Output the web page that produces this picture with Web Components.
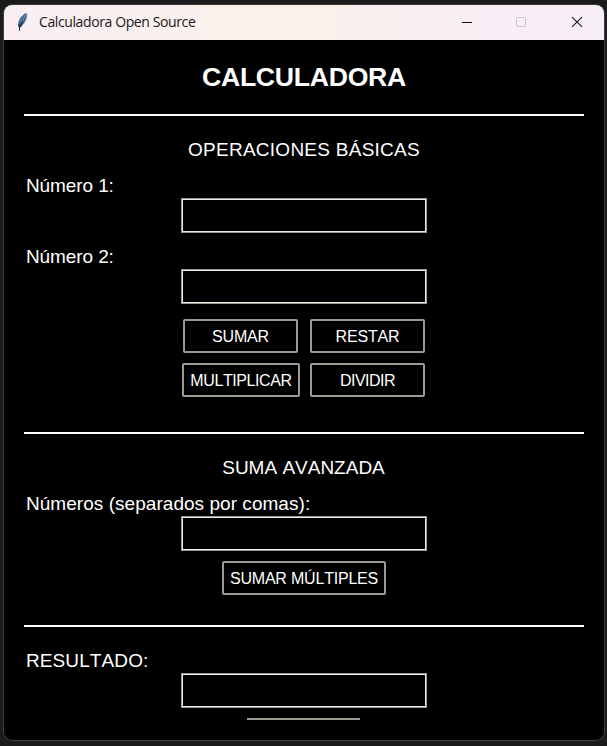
<!DOCTYPE html>
<html lang="es">
<head>
<meta charset="utf-8">
<title>Calculadora Open Source</title>
<style>
html,body{margin:0;height:100%;background:#1b1b1b;overflow:hidden}
body{font-family:"Liberation Sans",Arial,sans-serif;color:#fff;box-sizing:border-box;padding:4px 2px 5px 3px}
.pair{display:grid;grid-template-columns:118px 115px;column-gap:10px;row-gap:10px;justify-items:start;width:243px;margin:15px 0 35px 158px}
.pair calc-button:first-child{margin-left:1px}
</style>
</head>
<body>
<app-window caption="Calculadora Open Source">
  <calc-label kind="title" style="--h:74px;--lh:74px;--ls:-.3px">CALCULADORA</calc-label>
  <calc-rule></calc-rule>
  <calc-label kind="center" style="--h:56px;--lh:68px;--ls:.26px">OPERACIONES BÁSICAS</calc-label>
  <calc-label style="--h:26px;--lh:28px;--ls:-.1px">Número 1:</calc-label>
  <calc-field></calc-field>
  <calc-label style="--h:36px;--lh:48px;--ls:-.1px">Número 2:</calc-label>
  <calc-field></calc-field>
  <div class="pair">
    <calc-button style="--w:115px;--ls:-.15px">SUMAR</calc-button>
    <calc-button style="--w:115px;--ls:-.15px">RESTAR</calc-button>
    <calc-button style="--w:118px;--ls:-.4px">MULTIPLICAR</calc-button>
    <calc-button style="--w:115px;--ls:-.5px">DIVIDIR</calc-button>
  </div>
  <calc-rule></calc-rule>
  <calc-label kind="center" style="--h:56px;--lh:68px;padding-right:1px">SUMA AVANZADA</calc-label>
  <calc-label style="--h:26px;--lh:28px;--ls:.04px">Números (separados por comas):</calc-label>
  <calc-field></calc-field>
  <calc-button style="--w:164px;--ls:-.2px;margin:10px auto 30px">SUMAR MÚLTIPLES</calc-button>
  <calc-rule></calc-rule>
  <calc-label style="--h:46px;--lh:68px;--ls:.1px">RESULTADO:</calc-label>
  <calc-field></calc-field>
  <calc-button style="--w:113px;margin:10px 0 0 223px;border-radius:0"></calc-button>
</app-window>
<script>
function define(name, html){
  const t=document.createElement('template');
  t.innerHTML=html;
  customElements.define(name,class extends HTMLElement{
    constructor(){super();this.attachShadow({mode:'open'}).append(t.content.cloneNode(true));}
    connectedCallback(){
      const c=this.shadowRoot.querySelector('[data-caption]');
      if(c)c.textContent=this.getAttribute('caption');
    }
  });
}
define('feather-icon',`<style>:host{display:block;width:14px;height:20px}svg{display:block}</style>
<svg width="14" height="20" viewBox="0 0 14 20">
<path d="M3 14.2C1.6 10.8 3.4 5.6 6.8 2.6C8.3 1.2 9.8 .3 10.4 .5C11.6 3.2 9 10 5.7 12.7Z" fill="#3c6899" stroke="#59616b" stroke-width=".7"/>
<path d="M4.8 9.7L10 1.7" stroke="#6797ca" stroke-width="1"/>
<path d="M3.5 17.6L3.6 13.6L6.6 8" fill="none" stroke="#171c24" stroke-width="1"/>
<path d="M2.6 11.6L3.7 14.2L5.9 12.5" fill="none" stroke="#171c24" stroke-width=".9"/></svg>`);
define('title-bar',`<style>
:host{display:flex;height:35px;align-items:center;box-sizing:border-box;color:#191719;background:linear-gradient(90deg,#f9eff3 0,#faf0ec 34%,#faf0ec 55%,#f8eef7 85%,#f8eef7 100%)}
feather-icon{margin:0 9px 0 12px}
.name{font:14px/34px "Open Sans","Noto Sans",sans-serif;letter-spacing:-.39px;flex:1;white-space:nowrap;padding-bottom:1px}
svg{display:block}</style>
<feather-icon></feather-icon><span class="name"><slot></slot></span>
<svg width="162" height="35" viewBox="0 0 162 35" fill="none">
<path d="M20 17.5H30" stroke="#111"/><rect x="74.5" y="12.5" width="9" height="9" rx="1" stroke="#cbc2ca"/>
<path d="M130 12.2L140 21.8M140 12.2L130 21.8" stroke="#19171a" stroke-width="1.1"/></svg>`);
define('app-window',`<style>
:host{display:flex;flex-direction:column;box-sizing:border-box;width:602px;height:737px;border:1px solid #414141;border-top-color:#373737;border-radius:9px;overflow:hidden;background:#000}
main{height:680px;flex:none;overflow:hidden;box-sizing:border-box;padding:0 20px}</style>
<title-bar><span data-caption></span></title-bar><main><slot></slot></main>`);
define('calc-label',`<style>
:host{display:block;height:var(--h);line-height:var(--lh);font-size:19px;letter-spacing:var(--ls,0);padding-left:2px;white-space:nowrap;font-kerning:none}
:host([kind]){text-align:center;padding:0}
:host([kind=title]){font-size:26.67px;font-weight:bold}</style><slot></slot>`);
define('calc-rule',`<style>:host{display:block;height:2px;background:#fff}</style>`);
define('calc-field',`<style>
:host{display:block;box-sizing:border-box;width:246px;height:35px;margin:0 auto;border:1px solid #9e9a91;box-shadow:inset 0 0 0 1px #eeebe7}</style>`);
define('calc-button',`<style>
:host{display:block;box-sizing:border-box;width:var(--w);height:34px;border:2px solid #9e9a91;border-radius:2px;font-size:16px;line-height:32px;letter-spacing:var(--ls,0);text-align:center;white-space:nowrap;font-kerning:none}</style><slot></slot>`);
</script>
</body>
</html>
